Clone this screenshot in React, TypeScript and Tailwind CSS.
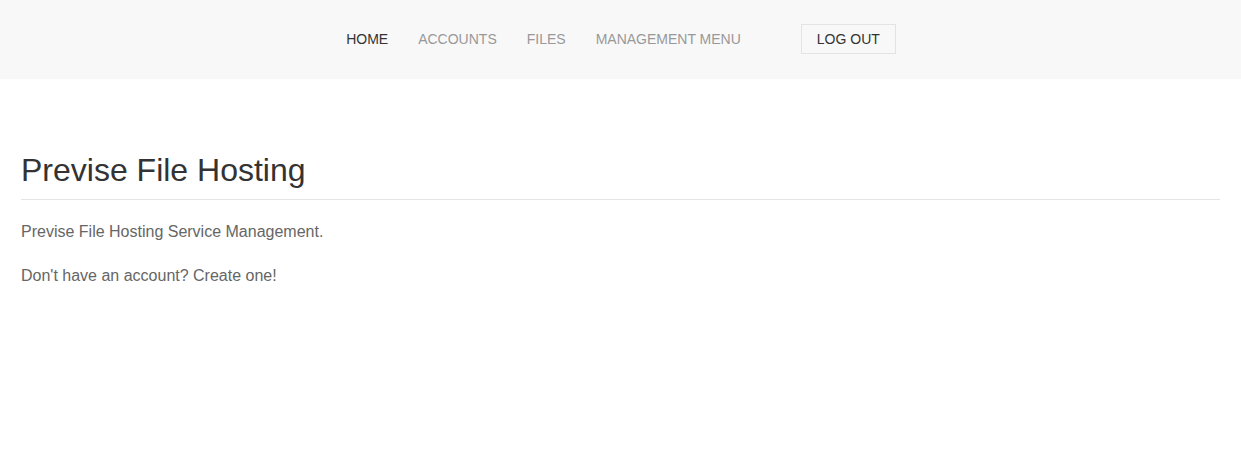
export default function App() {
  const links = ["ACCOUNTS", "FILES", "MANAGEMENT MENU"];
  return (
    <div className="min-h-[460px] bg-white font-['Liberation_Sans',Arial,sans-serif]">
      <header className="flex h-[79px] items-center justify-center bg-[#f8f8f8]">
        <nav className="mr-[14px] flex items-center text-[14px]">
          <a className="px-[15px] text-[#333]">HOME</a>
          {links.map((l) => (
            <a key={l} className="px-[15px] text-[#999]">{l}</a>
          ))}
          <button type="button" className="ml-[45px] mb-[1px] h-[30px] border border-[#e3e3e3] px-[15px] pt-[1px] text-[14px] text-[#333]">
            LOG OUT
          </button>
        </nav>
      </header>
      <main className="px-[21px] pt-[74px]">
        <h1 className="border-b border-[#e5e5e5] pb-[11px] text-[32px] leading-[1.1] text-[#333]">Previse File Hosting</h1>
        <p className="mt-[20px] text-[16px] leading-[24px] text-[#666]">Previse File Hosting Service Management.</p>
        <p className="mt-[20px] text-[16px] leading-[24px] text-[#666]">Don't have an account? Create one!</p>
      </main>
    </div>
  );
}
